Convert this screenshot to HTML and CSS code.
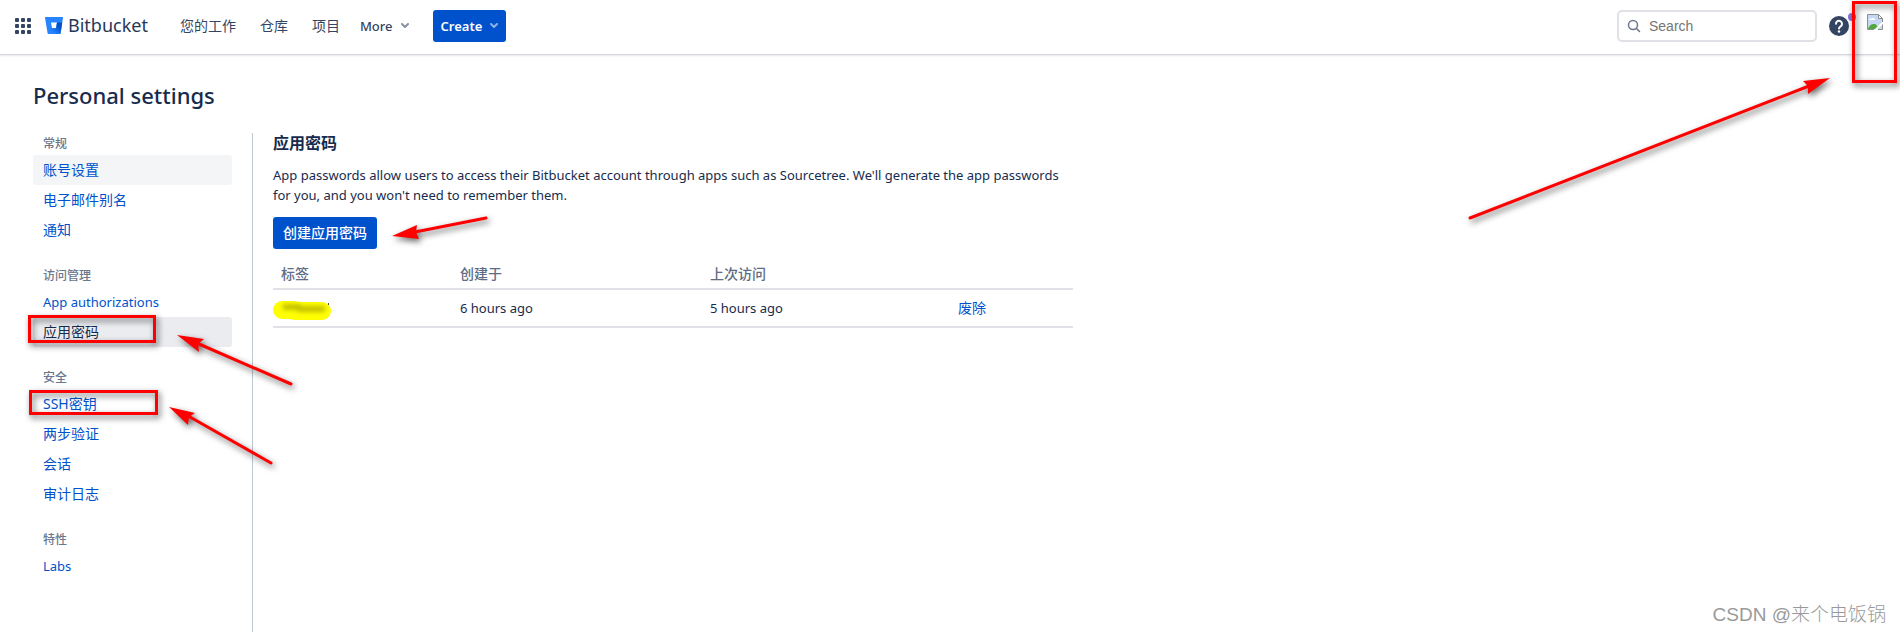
FILE: index.html
```html
<!DOCTYPE html>
<html lang="zh-CN">
<head>
  <meta charset="UTF-8">
  <title>Personal settings - Bitbucket</title>
  <link rel="stylesheet" href="styles.css">
</head>
<body>
<header class="topbar">
  <button class="icon-btn switcher" aria-label="Switch to">
    <svg width="16" height="16" viewBox="0 0 16 16" fill="#344563">
      <rect x="0" y="0" width="4" height="4" rx="1"/><rect x="6" y="0" width="4" height="4" rx="1"/><rect x="12" y="0" width="4" height="4" rx="1"/>
      <rect x="0" y="6" width="4" height="4" rx="1"/><rect x="6" y="6" width="4" height="4" rx="1"/><rect x="12" y="6" width="4" height="4" rx="1"/>
      <rect x="0" y="12" width="4" height="4" rx="1"/><rect x="6" y="12" width="4" height="4" rx="1"/><rect x="12" y="12" width="4" height="4" rx="1"/>
    </svg>
  </button>
  <a class="logo" href="#">
    <svg width="18" height="17" viewBox="0 0 18 17">
      <defs>
        <linearGradient id="bucket" x1="1" y1="0.3" x2="0.4" y2="0.9">
          <stop offset="0.2" stop-color="#0052cc"/><stop offset="1" stop-color="#2684ff"/>
        </linearGradient>
      </defs>
      <path fill="#2684ff" d="M.6 0h16.800a.6.6 0 0 1 .6.700l-2.400 15.600a.8.8 0 0 1-.8.700H3.400a.9.900 0 0 1-.8-.700L0 .700A.6.6 0 0 1 .6 0zM7 11.200h4l1-5.600H6z"/>
      <path fill="url(#bucket)" d="M17.200 5.600H12l-1 5.600H7l-4.200 5.500c.2.200.4.300.6.300h11.400c.4 0 .7-.3.8-.7z"/>
    </svg>
    <span>Bitbucket</span>
  </a>
  <nav class="menu">
    <a href="#">您的工作</a>
    <a href="#">仓库</a>
    <a href="#">项目</a>
  </nav>
  <button class="more">More
    <svg width="8" height="6" viewBox="0 0 8 6" fill="none" stroke="#8993a4" stroke-width="2" stroke-linecap="round" stroke-linejoin="round"><path d="M1 1l3 3 3-3"/></svg>
  </button>
  <button class="create">Create
    <svg width="8" height="6" viewBox="0 0 8 6" fill="none" stroke="#8cb0e8" stroke-width="2" stroke-linecap="round" stroke-linejoin="round"><path d="M1 1l3 3 3-3"/></svg>
  </button>
  <div class="tools">
    <label class="search">
      <svg width="14" height="14" viewBox="0 0 14 14" fill="none" stroke="#6b778c" stroke-width="1.500" stroke-linecap="round"><circle cx="6" cy="6" r="4.500"/><path d="M9.500 9.500l3 3"/></svg>
      <input type="text" placeholder="Search" aria-label="Search">
    </label>
    <button class="icon-btn help" aria-label="Help">
      <svg width="20" height="20" viewBox="0 0 20 20">
        <circle cx="10" cy="10" r="10" fill="#344563"/>
        <path d="M7 7.800a3 3 0 1 1 4.600 2.500c-1 .6-1.600 1-1.600 2.200" fill="none" stroke="#fff" stroke-width="2" stroke-linecap="round"/>
        <circle cx="10" cy="15.500" r="1.200" fill="#fff"/>
      </svg>
      <span class="dot"></span>
    </button>
    <a class="avatar" href="#" aria-label="Profile">
      <svg width="16" height="16" viewBox="0 0 16 16">
        <path d="M.5.5h11l4 4v11H.5z" fill="#c4d7f5"/>
        <path d="M2 6c0-1.500 2-2 2.500-1C5 3 8 3.500 8 6z" fill="#fff"/>
        <path d="M1 15c1-4 5-6 8-4.500l3 4.500z" fill="#4fa93c"/>
        <path d="M7 16l9-9v3l-6 6z" fill="#fff"/>
        <path d="M7 15.500H.5V.5h11l4 4V8M15.500 10.500v5H11" fill="none" stroke="#8f8f8f"/>
        <path d="M11.500.5v4h4z" fill="#fff" stroke="#8f8f8f"/>
      </svg>
    </a>
  </div>
</header>

<main class="page">
  <h1>Personal settings</h1>
  <div class="columns">
    <aside class="sidebar">
      <section>
        <h3>常规</h3>
        <a class="hover" href="#">账号设置</a>
        <a href="#">电子邮件别名</a>
        <a href="#">通知</a>
      </section>
      <section>
        <h3>访问管理</h3>
        <a class="latin" href="#">App authorizations</a>
        <a class="current" href="#">应用密码</a>
      </section>
      <section>
        <h3>安全</h3>
        <a href="#">SSH密钥</a>
        <a href="#">两步验证</a>
        <a href="#">会话</a>
        <a href="#">审计日志</a>
      </section>
      <section>
        <h3>特性</h3>
        <a class="latin" href="#">Labs</a>
      </section>
    </aside>
    <div class="content">
      <h2>应用密码</h2>
      <p class="latin">App passwords allow users to access their Bitbucket account through apps such as Sourcetree. We'll generate the app passwords for you, and you won't need to remember them.</p>
      <button class="primary">创建应用密码</button>
      <table>
        <thead>
          <tr><th class="c-label">标签</th><th class="c-created">创建于</th><th class="c-used">上次访问</th><th></th></tr>
        </thead>
        <tbody>
          <tr>
            <td class="masked">
              <svg width="58" height="19" viewBox="0 0 58 19">
                <path d="M9 0h12l6 1h22a9 9 0 0 1 0 18H22l-6-1H9A9 9 0 0 1 9 0z" fill="#ff0"/>
                <path d="M10 6h18M24 8h28" fill="none" stroke="#c4c000" stroke-width="6" class="smudge"/>
                <path d="M55.500 2v2" stroke="#555" stroke-width="1"/>
              </svg>
            </td>
            <td class="latin">6 hours ago</td>
            <td class="latin">5 hours ago</td>
            <td><a href="#">废除</a></td>
          </tr>
        </tbody>
      </table>
    </div>
  </div>
</main>

<!-- red marks over the page -->
<svg class="marks marks-left" width="500" height="480" viewBox="0 0 500 480">
  <g fill="none" stroke="#f00" stroke-width="3">
    <rect x="29.500" y="316.500" width="125" height="25"/>
    <rect x="30.500" y="391.500" width="126" height="22"/>
    <path stroke-linecap="round" d="M486 218l-71 14M291 384l-92-40M271 463l-81-46"/>
  </g>
  <path fill="#f00" d="M392 236l25-11-1 7 3 7zM177 335l27 4-6 5 1 8zM169 407l26 6-6 4-1 8z"/>
</svg>
<svg class="marks marks-right" width="440" height="230" viewBox="0 0 440 230">
  <g fill="none" stroke="#f00" stroke-width="3">
    <rect x="393.500" y="2.500" width="42" height="79"/>
    <path stroke-linecap="round" d="M10 218l339-132"/>
  </g>
  <path fill="#f00" d="M370 78l-27 3 5 5v8z"/>
</svg>
<div class="watermark">CSDN @来个电饭锅</div>
</body>
</html>
```
FILE: styles.css
```css
* { box-sizing: border-box; }
body { margin: 0; min-height: 100vh; position: relative;
  display: flex; flex-direction: column;
  font-family: "Noto Sans", "Noto Sans CJK SC", sans-serif;
  font-size: 14px; line-height: 20px; color: #172b4d; background: #fff; }
a      { color: #0052cc; text-decoration: none; }
a:hover { text-decoration: underline; }
button { font: inherit; border: none; cursor: pointer; }
svg    { display: block; flex: none; }
h1, h2, h3, p { margin: 0; }
/* Noto Sans runs wide next to the CJK text */
.latin, .more, .create { font-size: 13px; }

/* top bar */
.topbar { display: flex; align-items: center; height: 54px; padding: 0 16px 2px 15px;
  box-shadow: 0 1px 1px #d5d8df, 0 2px 2px #ebecf0; }
.icon-btn { background: none; padding: 0; }
.logo  { display: flex; align-items: center; gap: 5px; margin-left: 14px;
  color: #253858; font-size: 18px; line-height: 24px; padding-bottom: 2px; }
.menu  { display: flex; gap: 24px; margin-left: 32px; }
.menu a, .more { color: #344563; }
.more  { display: flex; align-items: center; gap: 8px; margin-left: 20px; background: none; padding: 0; font-weight: 500; }
.create { display: flex; align-items: center; gap: 8px; height: 32px; margin-left: 24px;
  padding: 0 8px; background: #0052cc; color: #fff; border-radius: 3px; font-weight: 600; }
.tools { display: flex; align-items: center; margin-left: auto; }
.search { display: flex; align-items: center; gap: 8px; width: 200px; height: 32px;
  padding: 0 8px; border: 2px solid #dfe1e6; border-radius: 5px; }
.search input { flex: 1; min-width: 0; border: none; outline: none; padding: 0;
  font: 14px/20px "Liberation Sans", sans-serif; background: none; }
.search input::placeholder { color: #757575; }
.help  { position: relative; margin-left: 12px; }
.dot   { position: absolute; top: -3px; right: -7px; width: 8px; height: 8px;
  border-radius: 50%; background: #8777d9; }
.avatar { margin: 0 1px 8px 18px; }

/* page */
.page  { flex: 1; display: flex; flex-direction: column; padding: 25px 33px 0; }
h1     { font-size: 22px; line-height: 32px; font-weight: 500; }
.columns { flex: 1; display: flex; margin-top: 22px; }
.sidebar { width: 220px; padding-right: 20px; border-right: 1px solid #c1c7d0; }
.sidebar section { margin-bottom: 20px; }
.sidebar h3 { padding-left: 10px; font-size: 12px; line-height: 22px; font-weight: 500; color: #6b778c; }
.sidebar a { display: block; padding: 5px 10px; border-radius: 3px; }
.sidebar .hover { background: #f4f5f7; }
.sidebar .current { background: #ebecf0; color: #172b4d; }

.content { flex: 0 1 800px; margin-left: 20px; }
h2     { font-size: 16px; line-height: 20px; font-weight: 600; }
.content p { margin: 12px 0; }
.primary { height: 32px; padding: 0 10px; background: #0052cc; color: #fff; border-radius: 3px; font-weight: 500; }
table  { width: 100%; margin-top: 11px; border-collapse: collapse; table-layout: fixed; }
th, td { padding: 8px; text-align: left; border-bottom: 2px solid #dfe1e6; }
th     { padding: 4px 8px; font-weight: 500; color: #5e6c84; }
.c-label { width: 179px; }
.c-created { width: 250px; }
.c-used { width: 248px; }
td.masked { padding: 10px 0 6px; }
.smudge { filter: blur(2px); }

/* overlays */
.marks { position: absolute; top: 0; pointer-events: none;
  filter: drop-shadow(2px 3px 3px rgba(0, 0, 0, 0.6)); }
.marks-left { left: 0; }
.marks-right { right: 0; }
.watermark { position: absolute; right: 14px; bottom: 5px; font-size: 19px; line-height: 24px;
  font-family: "Liberation Sans", "Noto Sans CJK SC", sans-serif; font-weight: 300; color: #999; }
```
